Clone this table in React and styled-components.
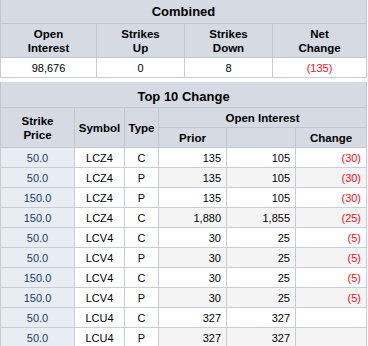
import styled, { createGlobalStyle } from 'styled-components';

const GlobalStyle = createGlobalStyle`
  body {
    margin: 0;
    background: #ffffff;
    font-family: "Liberation Sans", Arial, sans-serif;
  }
`;

const Page = styled.div`
  display: flex;
  flex-direction: column;
  gap: 4px;
  width: 366px;
`;

const Table = styled.table`
  width: 366px;
  table-layout: fixed;
  border-collapse: collapse;
  font-size: 11px;
  color: #000;
`;

const Title = styled.th`
  background: #d6dbe3;
  border: 1px solid #c2c6ce;
  border-top: none;
  font-size: 13px;
  font-weight: bold;
  height: ${p => p.$h || 23}px;
  padding: ${p => p.$pt || 0}px 0 0;
  text-align: center;
`;

const Head = styled.th`
  background: #d6dbe3;
  border: 1px solid #c2c6ce;
  font-size: 11.5px;
  font-weight: bold;
  line-height: 14px;
  height: ${p => p.$h || 19}px;
  padding: 0 2px;
  text-align: center;
`;

const Cell = styled.td`
  border: 1px solid #c8ccd3;
  height: 19px;
  padding: ${p => (p.$right ? '0 5px 0 0' : '0')};
  text-align: ${p => (p.$right ? 'right' : 'center')};
  background: ${p => (p.$strike ? '#e8edf4' : p.$shade ? '#f4f4f4' : '#ffffff')};
  color: ${p => (p.$red ? '#ff0a1a' : p.$strike ? '#1d3a66' : '#000')};
`;

const combined = { oi: '98,676', up: '0', down: '8', net: '(135)' };

const rows = [
  ['50.0', 'LCZ4', 'C', '135', '105', '(30)'],
  ['50.0', 'LCZ4', 'P', '135', '105', '(30)'],
  ['150.0', 'LCZ4', 'P', '135', '105', '(30)'],
  ['150.0', 'LCZ4', 'C', '1,880', '1,855', '(25)'],
  ['50.0', 'LCV4', 'C', '30', '25', '(5)'],
  ['50.0', 'LCV4', 'P', '30', '25', '(5)'],
  ['150.0', 'LCV4', 'C', '30', '25', '(5)'],
  ['150.0', 'LCV4', 'P', '30', '25', '(5)'],
  ['50.0', 'LCU4', 'C', '327', '327', ''],
  ['50.0', 'LCU4', 'P', '327', '327', ''],
];

function CombinedTable() {
  return (
    <Table>
      <colgroup>
        <col style={{ width: 96 }} />
        <col style={{ width: 88 }} />
        <col style={{ width: 88 }} />
        <col style={{ width: 94 }} />
      </colgroup>
      <thead>
        <tr>
          <Title colSpan={4}>Combined</Title>
        </tr>
        <tr>
          <Head $h={33}>Open<br />Interest</Head>
          <Head $h={33}>Strikes<br />Up</Head>
          <Head $h={33}>Strikes<br />Down</Head>
          <Head $h={33}>Net<br />Change</Head>
        </tr>
      </thead>
      <tbody>
        <tr>
          <Cell>{combined.oi}</Cell>
          <Cell>{combined.up}</Cell>
          <Cell>{combined.down}</Cell>
          <Cell $red>{combined.net}</Cell>
        </tr>
      </tbody>
    </Table>
  );
}

function TopChangeTable() {
  return (
    <Table>
      <colgroup>
        <col style={{ width: 74 }} />
        <col style={{ width: 50 }} />
        <col style={{ width: 34 }} />
        <col style={{ width: 68 }} />
        <col style={{ width: 69 }} />
        <col style={{ width: 71 }} />
      </colgroup>
      <thead>
        <tr>
          <Title colSpan={6} $h={22} $pt={3}>Top 10 Change</Title>
        </tr>
        <tr>
          <Head rowSpan={2}>Strike<br />Price</Head>
          <Head rowSpan={2}>Symbol</Head>
          <Head rowSpan={2}>Type</Head>
          <Head colSpan={3}>Open Interest</Head>
        </tr>
        <tr>
          <Head>Prior</Head>
          <Head></Head>
          <Head>Change</Head>
        </tr>
      </thead>
      <tbody>
        {rows.map((r, i) => (
          <tr key={i}>
            <Cell $strike>{r[0]}</Cell>
            <Cell>{r[1]}</Cell>
            <Cell>{r[2]}</Cell>
            <Cell $right $shade={i % 2 === 1}>{r[3]}</Cell>
            <Cell $right $shade={i % 2 === 1}>{r[4]}</Cell>
            <Cell $right $shade={i % 2 === 1} $red>{r[5]}</Cell>
          </tr>
        ))}
      </tbody>
    </Table>
  );
}

export default function App() {
  return (
    <>
      <GlobalStyle />
      <Page>
        <CombinedTable />
        <TopChangeTable />
      </Page>
    </>
  );
}
